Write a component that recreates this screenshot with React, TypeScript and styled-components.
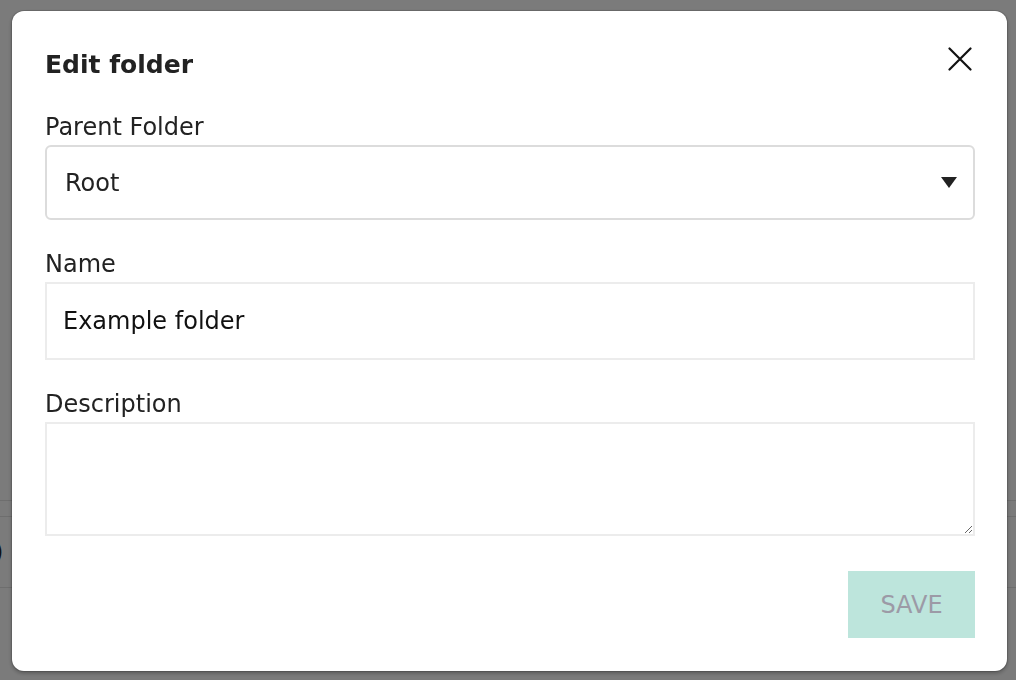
import React from 'react';
import styled, { createGlobalStyle } from 'styled-components';

const GlobalStyle = createGlobalStyle`
  html, body {
    margin: 0;
    padding: 0;
    height: 100%;
    background: #f6f6f6;
    font-family: "DejaVu Sans", "Liberation Sans", sans-serif;
  }
  * { box-sizing: border-box; }
`;

const Page = styled.div`
  height: 680px;
  padding-top: 500px;
  overflow: hidden;
`;

const BgRow = styled.div<{ h: number }>`
  height: ${p => p.h}px;
  border-top: 1px solid #dcdcdc;
  display: flex;
  align-items: center;
  font-size: 24px;
  color: #222;
  margin-left: -6px;
`;

const Overlay = styled.div`
  position: fixed;
  inset: 0;
  background: rgba(0, 0, 0, 0.5);
  padding: 11px 9px 9px 12px;
  display: flex;
`;

const Modal = styled.div`
  width: 995px;
  height: 660px;
  background: #fff;
  border-radius: 12px;
  box-shadow: 0 0 0 1px rgba(0, 0, 0, 0.12), 0 2px 4px rgba(0, 0, 0, 0.3);
  padding: 36px 32px 33px 33px;
  display: flex;
  flex-direction: column;
`;

const Header = styled.div`
  display: flex;
  justify-content: space-between;
  align-items: flex-start;
  margin-bottom: 33px;
`;

const Title = styled.h2`
  margin: 3px 0 0;
  font-size: 25px;
  line-height: 30px;
  font-weight: 700;
  color: #222;
`;

const CloseButton = styled.button`
  width: 24px;
  height: 24px;
  padding: 0;
  margin-right: 3px;
  border: none;
  background: none;
  cursor: pointer;
  display: flex;
`;

const Field = styled.div`
  display: flex;
  flex-direction: column;
  & + & {
    margin-top: 30px;
  }
`;

const Label = styled.label`
  font-size: 24px;
  line-height: 28px;
  color: #222;
  margin-bottom: 4px;
`;

const SelectBox = styled.div`
  height: 75px;
  border: 2px solid #dcdcdc;
  border-radius: 6px;
  padding: 0 16px 0 18px;
  display: flex;
  align-items: center;
  justify-content: space-between;
  font-size: 24px;
  color: #222;
`;

const TextInput = styled.input`
  height: 78px;
  border: 2px solid #ececec;
  border-radius: 0;
  padding: 0 16px;
  font-family: inherit;
  font-size: 24px;
  color: #111;
  outline: none;
`;

const TextArea = styled.textarea`
  height: 114px;
  border: 2px solid #ececec;
  border-radius: 0;
  padding: 12px 16px;
  font-family: inherit;
  font-size: 24px;
  outline: none;
  resize: vertical;
`;

const Footer = styled.div`
  display: flex;
  justify-content: flex-end;
  margin-top: 35px;
`;

const SaveButton = styled.button`
  width: 127px;
  height: 67px;
  border: none;
  background: #bde5dc;
  color: #9c9aa6;
  font-family: inherit;
  font-size: 24px;
  text-transform: uppercase;
  cursor: not-allowed;
`;

export default function App() {
  return (
    <>
      <GlobalStyle />
      <Page>
        <BgRow h={16} />
        <BgRow h={71}>)</BgRow>
        <BgRow h={60} />
      </Page>
      <Overlay>
        <Modal>
          <Header>
            <Title>Edit folder</Title>
            <CloseButton aria-label="Close">
              <svg width="24" height="24" viewBox="0 0 24 24">
                <path d="M1.5 1.5 L22.5 22.5 M22.5 1.5 L1.5 22.5" stroke="#111" strokeWidth="2.2" strokeLinecap="round" />
              </svg>
            </CloseButton>
          </Header>
          <Field>
            <Label>Parent Folder</Label>
            <SelectBox>
              <span>Root</span>
              <svg width="16" height="11" viewBox="0 0 16 11">
                <polygon points="0,0 16,0 8,11" fill="#222" />
              </svg>
            </SelectBox>
          </Field>
          <Field>
            <Label>Name</Label>
            <TextInput defaultValue="Example folder" />
          </Field>
          <Field>
            <Label>Description</Label>
            <TextArea />
          </Field>
          <Footer>
            <SaveButton disabled>Save</SaveButton>
          </Footer>
        </Modal>
      </Overlay>
    </>
  );
}
